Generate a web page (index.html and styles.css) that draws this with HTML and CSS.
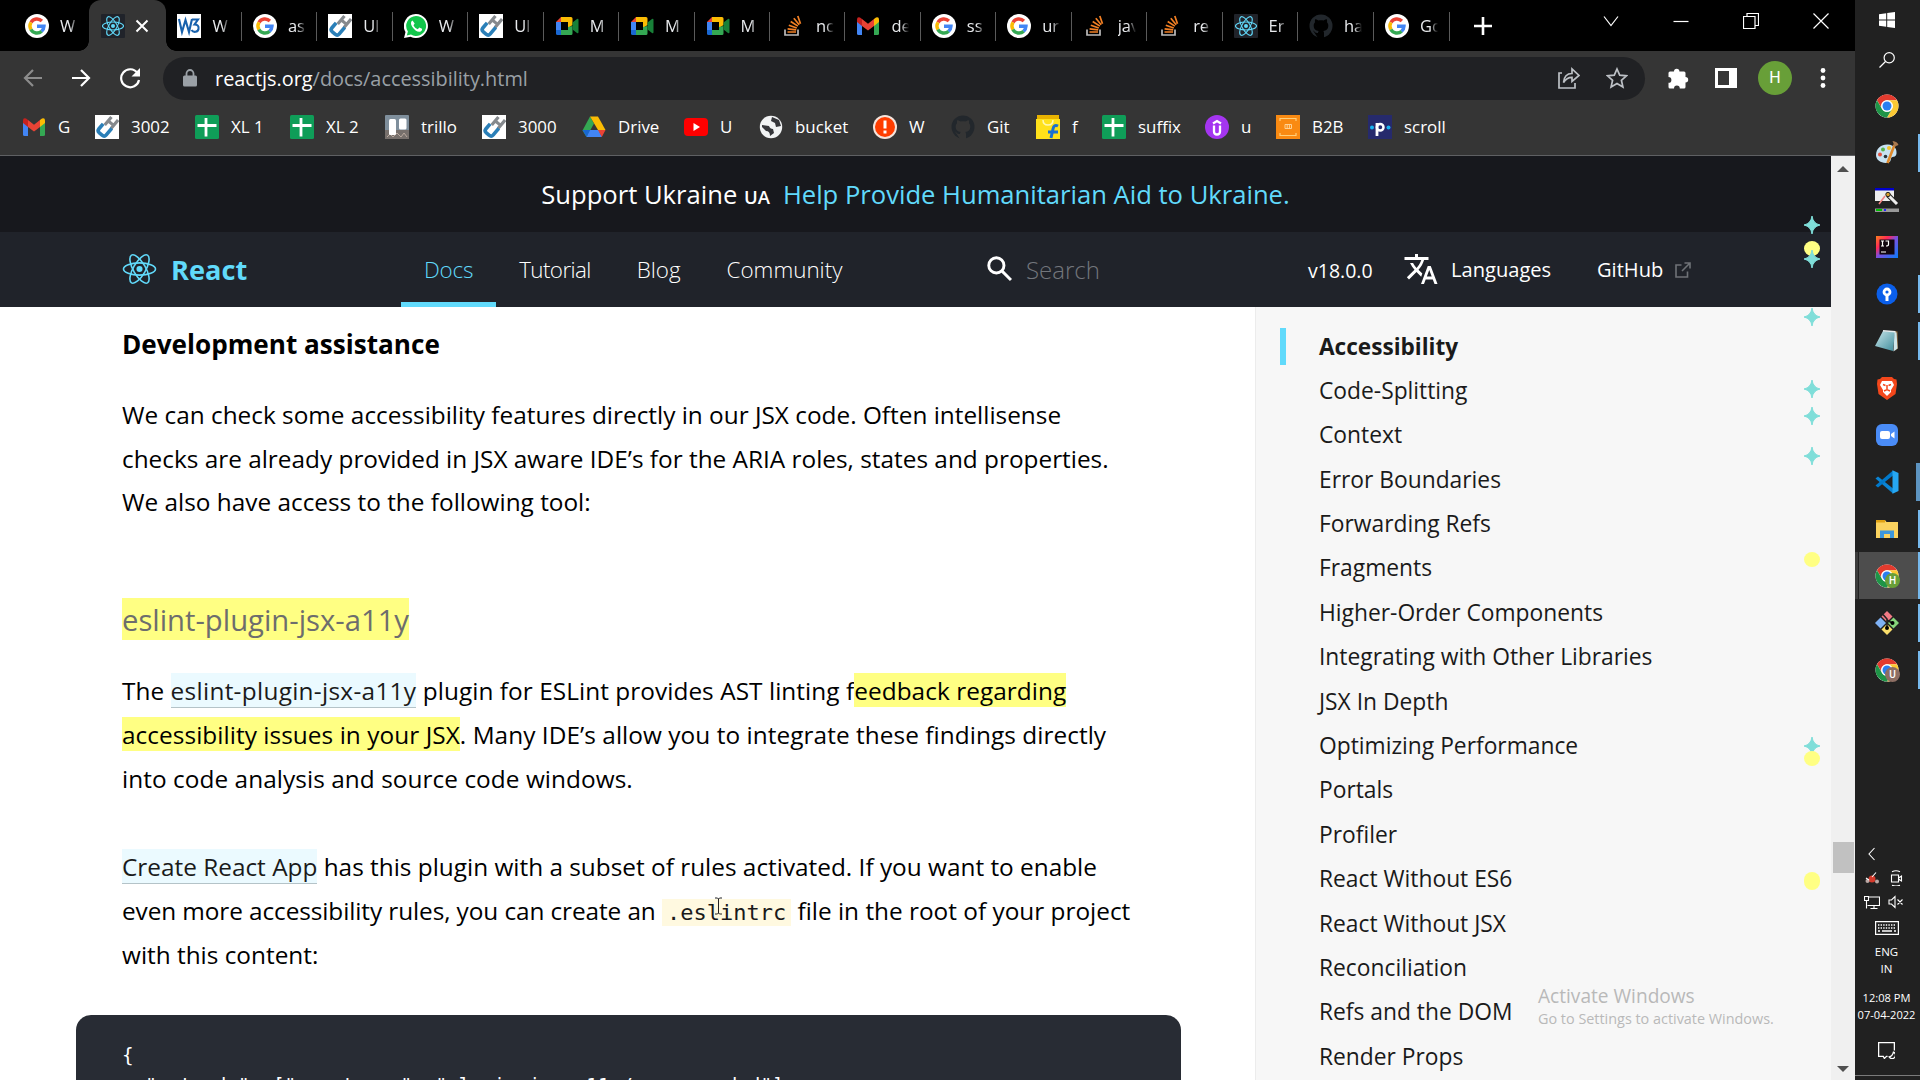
FILE: index.html
```
<!DOCTYPE html>
<html lang="en">
<head>
<meta charset="utf-8">
<title>Accessibility – React</title>
<link rel="stylesheet" href="styles.css">
</head>
<body>
<svg class="defs" aria-hidden="true">
  <defs>
    <linearGradient id="ijg" x1="0" y1="0" x2="1" y2="1"><stop offset="0" stop-color="#fc801d"/><stop offset=".3" stop-color="#fe2857"/><stop offset=".5" stop-color="#7b4fe0"/><stop offset="1" stop-color="#087cfa"/></linearGradient>
    <linearGradient id="note" x1="0" y1="0" x2="1" y2="1"><stop offset="0" stop-color="#c9e6ea"/><stop offset="1" stop-color="#3f8d9c"/></linearGradient>
  </defs>
  <symbol id="google" viewBox="0 0 24 24"><circle cx="12" cy="12" r="12" fill="#fff"/><g fill="none" stroke-width="3.4"><path d="M6 8.300A7 7 0 0 1 16.900 7" stroke="#ea4335"/><path d="M6 15.600A7 7 0 0 1 6 8.300" stroke="#fbbc05"/><path d="M16.700 17.200A7 7 0 0 1 5.900 15.500" stroke="#34a853"/><path d="M12 12.300h7A7 7 0 0 1 16.600 17.300" stroke="#4285f4"/></g></symbol>
  <symbol id="atom" viewBox="-12 -11 24 22"><circle r="2.100" fill="#61dafb"/><g fill="none" stroke="#61dafb" stroke-width="1.100"><ellipse rx="11" ry="4.200"/><ellipse rx="11" ry="4.200" transform="rotate(60)"/><ellipse rx="11" ry="4.200" transform="rotate(120)"/></g></symbol>
  <symbol id="reactfav" viewBox="-12 -12 24 24"><rect x="-12" y="-12" width="24" height="24" rx="1" fill="#20232a"/><circle r="2" fill="#61dafb"/><g fill="none" stroke="#61dafb" stroke-width="1.100"><ellipse rx="10.500" ry="4"/><ellipse rx="10.500" ry="4" transform="rotate(60)"/><ellipse rx="10.500" ry="4" transform="rotate(120)"/></g></symbol>
  <symbol id="w3" viewBox="0 0 24 24"><rect width="24" height="24" fill="#fff"/><path d="M2 5l3 13 3.500-12 3.500 12 3-13M15 5.500h6l-3.500 5c3 0 4.500 1.500 4 4.500-.5 3-5 4-7 1" fill="none" stroke="#1861ac" stroke-width="2.100"/></symbol>
  <symbol id="ub" viewBox="0 0 24 24"><rect width="24" height="24" fill="#fff"/><g fill="none" stroke-width="3.200" transform="rotate(40 12 12)"><path d="M9 1.500v10.500M16 -.5v11M9 6.500h7" stroke="#85898d"/><path d="M7 12v6.500q0 3 3 3h3.500q3 0 3-3V10" stroke="#2a7fb8" stroke-width="3.600"/></g></symbol>
  <symbol id="whatsapp" viewBox="0 0 24 24"><path d="M12 0a12 12 0 1 1-5.500 22.700L0 24l1.500-6A12 12 0 0 1 12 0z" fill="#fff"/><path d="M12 2a10 10 0 1 1-5 18.600L2.800 21.500l1.100-4A10 10 0 0 1 12 2z" fill="#12c64b"/><path d="M8.500 6.500c-2 1-2 3.500-.3 6.200 2.300 3.600 5.600 5.800 8 5 1.600-.6 2-1.700 1.800-2.900l-2.700-1.300-1.500 1.700c-2-.7-3.500-2.200-4.300-4l1.200-1.600z" fill="#fff"/></symbol>
  <symbol id="meet" viewBox="0 0 24 20"><path d="M1 6L6 1v5z" fill="#ea4335"/><path d="M6 1h10q1.500 0 1.500 1.500V9L13 12V6H6z" fill="#fbbc04"/><path d="M1 6h5v8H1z" fill="#4285f4"/><path d="M1 14h5v5H2.500Q1 19 1 17.500z" fill="#1967d2"/><path d="M6 14h7v-3l4.500-1v7.500q0 1.500-1.500 1.500H6z" fill="#34a853"/><path d="M17.500 6.500L22 3q1.500-.8 1.500 1v12q0 1.800-1.500 1l-4.500-3.500z" fill="#188038"/></symbol>
  <symbol id="stack" viewBox="0 0 24 24"><path d="M4 15.500V21h13v-5.500" fill="none" stroke="#bcbbbb" stroke-width="1.700"/><path d="M6.500 18h8.500M6.600 14.800l8.600 1M7.800 11.300l8 2.700M9.700 7.500l7.200 4.600M12.800 4.200l5.400 6.500M16.800 2l2.700 7.700" stroke="#f48024" stroke-width="1.700"/></symbol>
  <symbol id="gmail" viewBox="0 0 24 19"><path d="M1 3v14q0 1.500 1.500 1.500H6V8z" fill="#4285f4"/><path d="M23 3v14q0 1.500-1.500 1.500H18V8z" fill="#34a853"/><path d="M18 2.500L20 1q3-1 3 2v2.500l-5 4z" fill="#fbbc04"/><path d="M6 2.500L4 1Q1 0 1 3v2.500l5 4z" fill="#c5221f"/><path d="M6 2.500l6 4.700 6-4.700v7L12 14 6 9.500z" fill="#ea4335"/></symbol>
  <symbol id="github" viewBox="0 0 24 24"><circle cx="12" cy="12" r="11.500" fill="#22272c"/><path d="M9 24v-5c-3 .5-3.500-2-5-2.500M15 24v-5c0-1-.3-1.500-.7-2 3-.4 5-1.700 5-5.500 0-1.300-.5-2.500-1.300-3.300.2-.8.200-2-.2-3-1.200 0-2.300.7-3.200 1.300-1.700-.4-3.500-.4-5.200 0C8.500 5.900 7.400 5.200 6.200 5.200c-.4 1-.4 2.200-.2 3C5.200 9 4.700 10.200 4.700 11.500c0 3.800 2 5.100 5 5.500-.4.500-.7 1-.7 2v5z" fill="var(--hole,#000)"/></symbol>
  <symbol id="sheet" viewBox="0 0 24 24"><rect width="24" height="24" rx="1.500" fill="#0f9d58"/><path d="M2.500 10.500h19M11 3v18.500" stroke="#fff" stroke-width="2.800"/></symbol>
  <symbol id="trello" viewBox="0 0 24 24"><rect width="24" height="24" rx="1" fill="#7f8f9c"/><path d="M0 15h24v9H0z" fill="#77706c"/><path d="M2 22l3-3 3 3 4-4 4 4 3-4 3 4" stroke="#b9a99e" fill="none"/><rect x="4" y="4" width="7" height="16" rx="1.500" fill="#fff"/><rect x="14" y="3.500" width="7.500" height="11" rx="1.500" fill="#fff"/></symbol>
  <symbol id="drive" viewBox="0 0 24 21"><path d="M8 0l4 7L4.500 20.500 .5 14z" fill="#34a853"/><path d="M8 0h8l7.500 13.500H16z" fill="#fbbc04"/><path d="M7.500 13.500h9l3.500 7H4.500z" fill="#4285f4"/><path d="M.5 13.500h7.700l-3.700 7z" fill="#1967d2"/><path d="M16 13.500h7.500l-3.700 7z" fill="#ea4335"/></symbol>
  <symbol id="youtube" viewBox="0 0 24 18"><rect width="24" height="18" rx="4" fill="#f00"/><path d="M9.500 5v8l6.500-4z" fill="#fff"/></symbol>
  <symbol id="globe" viewBox="0 0 24 24"><circle cx="12" cy="12" r="11.200" fill="#f1f3f4"/><path d="M3 10l7 1q1 3 4 3l1 4-4 3q0-5-4-5l-4-4zM13 2l-1 4 4 2 1 4 5-1-2-6z" fill="#35363a"/></symbol>
  <symbol id="alert" viewBox="0 0 24 24"><circle cx="12" cy="12" r="12" fill="#f5e4dc"/><circle cx="12" cy="12" r="10" fill="#ff3d00"/><path d="M12 5.500v8M12 15.500v3" stroke="#fff" stroke-width="3"/></symbol>
  <symbol id="flip" viewBox="0 0 24 24"><path d="M0 4h24v20H0z" fill="#ffe11b"/><path d="M1 0h22v4H1z" fill="#e8b200"/><path d="M7 5q0 5 5 5t5-5" fill="none" stroke="#fff8b0" stroke-width="1.500"/><path d="M22 11q-4-2-5 3l-2 9M12 17h10" fill="none" stroke="#1a6fd0" stroke-width="3"/></symbol>
  <symbol id="udemy" viewBox="0 0 24 24"><circle cx="12" cy="12" r="12" fill="#a435f0"/><path d="M9 10.500v6q0 3 3 3t3-3v-6M8 8.500L12 6l4 2.500" fill="none" stroke="#fff" stroke-width="2.300"/></symbol>
  <symbol id="b2b" viewBox="0 0 24 24"><rect width="24" height="24" fill="#f98a12"/><path d="M4 6V3.500h16V6M4 18v2.500h16V18" fill="none" stroke="#ffcf7a" stroke-width="1.200"/><path d="M9 9.500h6.500v4H9zM11.200 9.500v4M13.400 9.500v4" fill="none" stroke="#ffd9a0" stroke-width=".9"/></symbol>
  <symbol id="pp" viewBox="0 0 24 24"><rect width="24" height="24" fill="#262a6c"/><path d="M9 8v13" stroke="#fff" stroke-width="2.800"/><circle cx="12.200" cy="12.200" r="3.300" fill="none" stroke="#fff" stroke-width="2.500"/><circle cx="4" cy="12.500" r="2" fill="#19b5f1"/><circle cx="20.500" cy="12.500" r="2" fill="#19b5f1"/></symbol>
  <symbol id="chrome" viewBox="-12 -12 24 24"><circle r="11.500" fill="#fff"/><path d="M-10-5.700A11.500 11.500 0 0 1 10-5.700H0A5.700 5.700 0 0 0-5 2.800z" fill="#e33b2e"/><path d="M10-5.700A11.500 11.500 0 0 1 .2 11.500L5 2.900A5.700 5.700 0 0 0 0-5.700z" fill="#fcc934"/><path d="M0 11.500A11.500 11.500 0 0 1-10-5.700l5 8.600A5.700 5.700 0 0 0 5 2.900z" fill="#1e9447"/><circle r="5.800" fill="#fff"/><circle r="4.500" fill="#2a7ef0"/></symbol>
  <symbol id="spark" viewBox="0 0 16 18"><path d="M8 0Q9 7.500 16 9 9 10.500 8 18 7 10.500 0 9 7 7.500 8 0z" fill="#7fded9" stroke="#7fded9"/></symbol>
</svg>

<div class="desktop">
  <div class="window">
    <div class="tabstrip">
      <div class="tab"><svg><use href="#google"/></svg><span>W</span></div>
      <div class="tab active"><svg><use href="#reactfav"/></svg><svg class="x" viewBox="0 0 14 14"><path d="M1.500 1.500l11 11M12.500 1.500l-11 11" stroke="#fff" stroke-width="2"/></svg></div>
      <div class="tab sep"><svg><use href="#w3"/></svg><span>W</span></div>
      <div class="tab sep"><svg><use href="#google"/></svg><span>as</span></div>
      <div class="tab sep"><svg><use href="#ub"/></svg><span>Ul</span></div>
      <div class="tab sep"><svg><use href="#whatsapp"/></svg><span>W</span></div>
      <div class="tab sep"><svg><use href="#ub"/></svg><span>Ul</span></div>
      <div class="tab sep"><svg><use href="#meet"/></svg><span>M</span></div>
      <div class="tab sep"><svg><use href="#meet"/></svg><span>M</span></div>
      <div class="tab sep"><svg><use href="#meet"/></svg><span>M</span></div>
      <div class="tab sep"><svg><use href="#stack"/></svg><span>nc</span></div>
      <div class="tab sep"><svg><use href="#gmail"/></svg><span>de</span></div>
      <div class="tab sep"><svg><use href="#google"/></svg><span>ss</span></div>
      <div class="tab sep"><svg><use href="#google"/></svg><span>ur</span></div>
      <div class="tab sep"><svg><use href="#stack"/></svg><span>jav</span></div>
      <div class="tab sep"><svg><use href="#stack"/></svg><span>re</span></div>
      <div class="tab sep"><svg><use href="#reactfav"/></svg><span>Er</span></div>
      <div class="tab sep"><svg><use href="#github"/></svg><span>ha</span></div>
      <div class="tab sep"><svg><use href="#google"/></svg><span>Gc</span></div>
      <svg class="newtab" viewBox="0 0 18 18"><path d="M9 0v18M0 9h18" stroke="#fff" stroke-width="2.600"/></svg>
      <div class="controls">
        <svg viewBox="0 0 16 16"><path d="M1 3.500l7 9 7-9" /></svg>
        <svg viewBox="0 0 16 16"><path d="M.5 8.500h15"/></svg>
        <svg viewBox="0 0 16 16"><path d="M.5 3.500h11.500v12H.5zM4 3.500V.5h11.500v12H12"/></svg>
        <svg viewBox="0 0 16 16"><path d="M.5.5l15 15M15.500.5l-15 15"/></svg>
      </div>
    </div>

    <div class="toolbar">
      <svg class="nav dim" viewBox="0 0 20 20"><path d="M19 10H2M10 2l-8 8 8 8"/></svg>
      <svg class="nav" viewBox="0 0 20 20"><path d="M1 10h17M10 2l8 8-8 8"/></svg>
      <svg class="nav reload" viewBox="0 0 22 22"><path d="M18.500 6A9 9 0 1 0 20 13"/><path d="M21 1v8.500h-8.500z" fill="#fff" stroke="none"/></svg>
      <div class="omnibox">
        <svg class="lock" viewBox="0 0 14 18"><rect y="6.500" width="14" height="11" rx="1.500" fill="#9aa0a6"/><path d="M3.500 7V4.500a3.500 3.500 0 0 1 7 0V7" fill="none" stroke="#9aa0a6" stroke-width="1.800"/></svg>
        <span class="url"><b>reactjs.org</b>/docs/accessibility.html</span>
        <svg class="share" viewBox="0 0 22 22"><path d="M4 6H1v15h16v-5M5.500 15.500C6 10 9 6.500 14 6.500V2l7 6.500-7 6v-4.200c-4 0-6.500 1.700-8.500 5.200z"/></svg>
        <svg class="star" viewBox="0 0 22 22"><path d="M11 2l2.700 6.200 6.800.6-5.100 4.500 1.500 6.600L11 16.400l-5.900 3.500 1.500-6.600L1.500 8.800l6.800-.6z"/></svg>
      </div>
      <svg class="puzzle" viewBox="0 0 22 22"><path d="M7 4.500a2.700 2.700 0 0 1 5.400 0H17q1.500 0 1.500 1.500v4a2.700 2.700 0 0 1 0 5.400V20q0 1.500-1.500 1.500h-4.200a2.900 2.900 0 0 0-5.800 0H3Q1.500 21.500 1.500 20v-4.200a2.900 2.900 0 0 0 0-5.800V6Q1.500 4.500 3 4.500z" fill="#fff"/></svg>
      <svg class="panel" viewBox="0 0 22 20"><path d="M1.500 1.500h19v17h-19z" fill="none" stroke="#fff" stroke-width="3"/><path d="M14 0h8v20h-8z" fill="#fff"/></svg>
      <div class="avatar">H</div>
      <svg class="dots" viewBox="0 0 6 20"><circle cx="3" cy="2.500" r="2.400"/><circle cx="3" cy="10" r="2.400"/><circle cx="3" cy="17.500" r="2.400"/></svg>
    </div>

    <div class="bookmarks">
      <span><svg><use href="#gmail"/></svg>G</span>
      <span><svg><use href="#ub"/></svg>3002</span>
      <span><svg><use href="#sheet"/></svg>XL 1</span>
      <span><svg><use href="#sheet"/></svg>XL 2</span>
      <span><svg><use href="#trello"/></svg>trillo</span>
      <span><svg><use href="#ub"/></svg>3000</span>
      <span><svg><use href="#drive"/></svg>Drive</span>
      <span><svg><use href="#youtube"/></svg>U</span>
      <span><svg><use href="#globe"/></svg>bucket</span>
      <span><svg><use href="#alert"/></svg>W</span>
      <span><svg><use href="#github"/></svg>Git</span>
      <span><svg><use href="#flip"/></svg>f</span>
      <span><svg><use href="#sheet"/></svg>suffix</span>
      <span><svg><use href="#udemy"/></svg>u</span>
      <span><svg><use href="#b2b"/></svg>B2B</span>
      <span><svg><use href="#pp"/></svg>scroll</span>
    </div>

    <div class="viewport">
      <div class="page">
        <div class="banner"><span>Support Ukraine <small>UA</small></span><a>Help Provide Humanitarian Aid to Ukraine.</a></div>
        <header class="header">
          <div class="brand"><svg><use href="#atom"/></svg>React</div>
          <nav class="menu"><a class="on">Docs</a><a class="tight">Tutorial</a><a>Blog</a><a>Community</a></nav>
          <div class="search"><svg viewBox="0 0 24 24"><circle cx="9" cy="9" r="7.300"/><path d="M14.500 14.500L23 23"/></svg>Search</div>
          <div class="meta">
            <a class="version">v18.0.0</a>
            <a class="lang"><svg viewBox="0 0 24 24"><path d="M12.870 15.070l-2.540-2.510.03-.03c1.740-1.940 2.980-4.170 3.710-6.530H17V4h-7V2H8v2H1v1.990h11.170C11.500 7.920 10.440 9.750 9 11.350 8.070 10.320 7.300 9.190 6.690 8h-2c.73 1.630 1.730 3.170 2.980 4.560l-5.090 5.020L4 19l5-5 3.110 3.110.76-2.040zM18.500 10h-2L12 22h2l1.120-3h4.750L21 22h2l-4.500-12zm-2.620 7l1.620-4.330L19.120 17h-3.240z" fill="#fff"/></svg>Languages</a>
            <a class="gh">GitHub<svg viewBox="0 0 16 16"><path d="M6.500 3H1v12h11.500V9.500M9.500 1H15v5.500M15 1L7 9"/></svg></a>
          </div>
        </header>
        <div class="body">
          <main class="article">
            <h3>Development assistance</h3>
            <p>We can check some accessibility features directly in our JSX code. Often intellisense<br>checks are already provided in JSX aware IDE’s for the ARIA roles, states and properties.<br>We also have access to the following tool:</p>
            <h4><mark>eslint-plugin-jsx-a11y</mark></h4>
            <p>The <a class="wide">eslint-plugin-jsx-a11y</a> plugin for ESLint provides AST linting f<mark>eedback regarding</mark><br><mark>accessibility issues in your JSX</mark>. Many IDE’s allow you to integrate these findings directly<br>into code analysis and source code windows.</p>
            <p class="second"><a>Create React App</a> has this plugin with a subset of rules activated. If you want to enable<br><span class="snug">even more accessibility rules, you can create an </span><code>.eslintrc</code> file in the root of your project<br>with this content:</p>
            <pre>{
  "extends": ["react-app", "plugin:jsx-a11y/recommended"]
}</pre>
          </main>
          <aside class="sidebar">
            <ul>
              <li class="current">Accessibility</li>
              <li>Code-Splitting</li>
              <li>Context</li>
              <li>Error Boundaries</li>
              <li>Forwarding Refs</li>
              <li>Fragments</li>
              <li>Higher-Order Components</li>
              <li>Integrating with Other Libraries</li>
              <li>JSX In Depth</li>
              <li>Optimizing Performance</li>
              <li>Portals</li>
              <li>Profiler</li>
              <li>React Without ES6</li>
              <li>React Without JSX</li>
              <li>Reconciliation</li>
              <li>Refs and the DOM</li>
              <li>Render Props</li>
            </ul>
          </aside>
        </div>
        <div class="markers">
          <svg class="m1"><use href="#spark"/></svg>
          <i class="m2"></i>
          <svg class="m3"><use href="#spark"/></svg>
          <svg class="m4"><use href="#spark"/></svg>
          <svg class="m5"><use href="#spark"/></svg>
          <svg class="m6"><use href="#spark"/></svg>
          <svg class="m7"><use href="#spark"/></svg>
          <i class="m8"></i>
          <svg class="m9"><use href="#spark"/></svg>
          <i class="m10"></i>
          <i class="m11"></i>
        </div>
        <div class="watermark"><b>Activate Windows</b>Go to Settings to activate Windows.</div>
        <svg class="ibeam" viewBox="0 0 9 18"><path d="M1 1h2.500l1 1 1-1H8M4.500 2v14M1 17h2.500l1-1 1 1H8"/></svg>
      </div>
      <div class="scrollbar">
        <svg viewBox="0 0 12 6"><path d="M0 6l6-6 6 6z"/></svg>
        <div class="thumb"></div>
        <svg viewBox="0 0 12 6"><path d="M0 0l6 6 6-6z"/></svg>
      </div>
    </div>
  </div>

  <div class="taskbar">
    <div class="slot short"><svg class="s16" viewBox="0 0 16 16"><path d="M0 2.200L7.200 1.200V7.500H0zM8.200 1L16 0v7.500H8.200zM0 8.500h7.200v6.300L0 13.800zM8.200 8.500H16V16l-7.800-1z" fill="#fff"/></svg></div>
    <div class="slot short gap"><svg class="s16" viewBox="0 0 16 16"><circle cx="10.200" cy="5.800" r="5.100" fill="none" stroke="#fff" stroke-width="1.200"/><path d="M6.500 9.500L.5 15.500" stroke="#fff" stroke-width="1.300"/></svg></div>
    <div class="slot"><svg><use href="#chrome"/></svg></div>
    <div class="slot open"><svg viewBox="0 0 24 24"><path d="M1 14C1 7 7 3 13 3.500s9 4 8.500 9c-.5 4-4 3-5 4s0 4-3 5C8 23 1 20 1 14z" fill="#c7e2f2"/><circle cx="5" cy="13.500" r="2" fill="#e2513f"/><circle cx="8" cy="8.500" r="2" fill="#58b34b"/><circle cx="14" cy="7" r="2" fill="#f3c22d"/><circle cx="10.500" cy="15.500" r="1.800" fill="#27323a"/><path d="M19.500 4L12.500 22" stroke="#e08a2c" stroke-width="2.600"/><path d="M17.500 0q5 .5 6 4l-5 2q1-3-1-6z" fill="#a9794f"/></svg></div>
    <div class="slot"><svg viewBox="0 0 24 24"><path d="M0 1h19v12H0z" fill="#eee"/><path d="M0 0h19v2.500H0z" fill="#00c"/><path d="M4 16l6-8" stroke="#f08080" stroke-width="1.500"/><path d="M13 7l9 9" stroke="#222" stroke-width="5"/><path d="M13 7l9 9" stroke="#eee" stroke-width="3"/><circle cx="13" cy="6.500" r="2.200" fill="#d89b2c" stroke="#222"/><path d="M0 20.500h24V24H0z" fill="#999"/><path d="M1 21h6v2H1z" fill="#0b0"/><path d="M9 21h2v2H9z" fill="#22f"/></svg></div>
    <div class="slot"><svg viewBox="0 0 24 24"><rect x="1" y="1" width="22" height="22" fill="url(#ijg)"/><rect x="4.500" y="4.500" width="15" height="15" fill="#12060f"/><path d="M6 6h3M7.500 6v5M6 11h3M10.500 6h3v3.500q0 1.500-2.500 1.500M6 17h5" fill="none" stroke="#fff" stroke-width="1.200"/></svg></div>
    <div class="slot open"><svg viewBox="0 0 24 24"><circle cx="12" cy="12" r="10.500" fill="#0b5fea"/><circle cx="12" cy="10" r="3" fill="none" stroke="#fff" stroke-width="2.800"/><path d="M12 13v6" stroke="#fff" stroke-width="3"/></svg></div>
    <div class="slot open"><svg viewBox="0 0 24 24"><path d="M20 2l2.500.5.500 17-3 2z" fill="#8d6b3f"/><path d="M8 2l12 1-2 19L0 17z" fill="url(#note)"/><path d="M19.500 3l2 .5 1 16-4 3z" fill="#cfe6ea"/><path d="M8 1.800l12.500 1" stroke="#e8eef0" stroke-width="1.600"/></svg></div>
    <div class="slot"><svg viewBox="0 0 24 24"><path d="M7 1h10l2 2 2.500.5L22 8l-1.500 10L12 24 3.500 18 2 8l.5-4.500L5 3z" fill="#f4471b"/><path d="M7 5h10l2 4-3 5v2l-4 4-4-4v-2L5 9z" fill="#fff"/><path d="M8 8.500l2.500 1M16 8.500l-2.500 1M12 9v5M9 15l3-1.500 3 1.500" fill="none" stroke="#f4471b" stroke-width="1.500"/></svg></div>
    <div class="slot"><svg viewBox="0 0 24 24"><rect x="1" y="1" width="22" height="22" rx="6" fill="#4a8cf7"/><rect x="5" y="8" width="10" height="8" rx="2" fill="#fff"/><path d="M16 11l3.500-2.500v7L16 13z" fill="#fff"/></svg></div>
    <div class="slot open wide"><svg viewBox="0 0 24 24"><path d="M.5 8.500L3 6.500l15 12V23.500z" fill="#0a84d4"/><path d="M.5 15.500L3 17.500 18 5.500V.5z" fill="#0179cb"/><path d="M17.500.3L23.500 3v18l-6 2.700z" fill="#26a7f2"/></svg></div>
    <div class="slot open"><svg viewBox="0 0 24 24"><path d="M1 3h9l1.500 2H23v16H1z" fill="#fbd35f"/><path d="M1 3h9v2.500H1z" fill="#e0a214"/><path d="M5 21v-7.500h14V21h-4v-4H9v4z" fill="#3d97db"/></svg></div>
    <div class="slot open selected"><svg><use href="#chrome"/></svg><b class="badge green">H</b></div>
    <div class="slot open"><svg viewBox="0 0 24 24"><path d="M12 0l5.500 5.500-5.500 5.500-5.500-5.500z" fill="#f27a85"/><path d="M5.500 6.500l5.500 5.500-5.500 5.500L0 12z" fill="#7fb2f5"/><path d="M18.500 6.500l5.500 5.500-5.500 5.500L13 12z" fill="#86d67b"/><path d="M12 13l5.500 5.500L12 24l-5.500-5.500z" fill="#fbdf6b"/><path d="M8 3.500L12 8v9M12 9l5 3" fill="none" stroke="#222" stroke-width="1.600"/><circle cx="12" cy="17" r="2"/><circle cx="17.500" cy="12" r="2"/></svg></div>
    <div class="slot open"><svg><use href="#chrome"/></svg><b class="badge brown">U</b></div>

    <div class="tray">
      <svg viewBox="0 0 16 16"><path d="M10.500 2L5 8l5.500 6"/></svg><span></span>
      <svg viewBox="0 0 16 16"><circle cx="8" cy="9" r="3.500" fill="#d43a2c" stroke="none"/><circle cx="3.500" cy="11" r="2" fill="#b9a7a4" stroke="none"/><circle cx="13" cy="11.500" r="2" fill="#b9a7a4" stroke="none"/><path d="M8 7l4-4.500M2 8l3 2"/></svg>
      <svg viewBox="0 0 16 16"><path d="M3.500 5h7v7h-7zM10.500 8l3-2v5l-3-2M4 1.800q4-2 8 0M4 15.200q4 1.500 8 0"/></svg>
      <svg viewBox="0 0 16 16"><path d="M5 3h10.500v8.500H3.500M10 11.500v3M6.500 14.500h7M.5 2.500h4v4h-4zM2.500 6.500v8"/></svg>
      <svg viewBox="0 0 16 16"><path d="M1 6h2.500L7 2.500v11L3.500 10H1zM9.500 5.500l5 5M14.500 5.500l-5 5"/></svg>
    </div>
    <svg class="keyboard" viewBox="0 0 24 14"><path d="M.6.600h22.800v12.800H.6z" fill="none" stroke="#fff" stroke-width="1.200"/><path d="M3 4h18M3 7h18" stroke="#fff" stroke-width="1.300" stroke-dasharray="1.400 1.200"/><path d="M3 10h2M7 10h10M19 10h2" stroke="#fff" stroke-width="1.300"/></svg>
    <div class="langs">ENG<br>IN</div>
    <div class="clock">12:08 PM<br><span>07-04-2022</span></div>
    <svg class="notify" viewBox="0 0 16 16"><path d="M9 13.500H8L6 15.500 5 13.500H.6V.6h14.800V8"/><path d="M14.500 9.500a3.200 3.200 0 1 1-4 4.500q3-.5 4-4.500z"/></svg>
    <div class="edge"></div>
  </div>
</div>
</body>
</html>
```
FILE: styles.css
```
* { box-sizing: border-box; }
body { margin: 0; background: #000; font-family: "Open Sans", "Noto Sans", sans-serif; overflow: hidden; }
svg { display: block; flex: none; }
.defs { position: absolute; width: 0; height: 0; }
.desktop { display: flex; width: 1920px; height: 1080px; overflow: hidden; }
.window { width: 1855px; display: flex; flex-direction: column; }

/* tab strip */
.tabstrip { height: 51px; flex: none; display: flex; background: #000; padding-left: 14px; color: #e8eaed; }
.tab { width: 75.450px; height: 51px; display: flex; align-items: center; padding: 0 0 0 11px; position: relative; font-size: 16.500px; }
.tab svg { width: 24px; height: 24px; margin-top: 1px; }
.tab span { margin-left: 11px; white-space: nowrap; -webkit-mask-image: linear-gradient(90deg, #000 10px, transparent 18px); mask-image: linear-gradient(90deg, #000 10px, transparent 18px); }
.tab.sep::after { content: ""; position: absolute; right: 0; top: 12px; width: 1px; height: 29px; background: #5a5a5a; }
.tab:nth-child(n+18) { width: 76px; }
.tab.active { background: #353535; border-radius: 12px 12px 0 0; width: 77px; padding-left: 12px; }
.tab.active::before, .tab.active::after { content: ""; position: absolute; bottom: 0; width: 10px; height: 10px; }
.tab.active::before { left: -10px; background: radial-gradient(circle at 0 0, transparent 9.500px, #353535 10px); }
.tab.active::after { right: -10px; background: radial-gradient(circle at 100% 0, transparent 9.500px, #353535 10px); }
.tab .x { width: 14px; height: 14px; margin-left: 10px; }
.newtab { width: 18px; height: 18px; margin: 17px 0 0 24px; }
.controls { margin-left: auto; display: flex; gap: 54px; padding: 13px 26px 0 0; }
.controls svg { width: 16px; height: 16px; fill: none; stroke: #fff; stroke-width: 1.200; }

/* toolbar */
.toolbar { height: 54px; flex: none; display: flex; align-items: center; background: #353535; padding: 0 29px 0 23px; }
.nav { width: 20px; height: 20px; margin-right: 28px; fill: none; stroke: #fff; stroke-width: 2.200; }
.nav.dim { stroke: #8c8c8c; }
.nav.reload { width: 22px; height: 22px; margin-right: 22px; }
.omnibox { width: 1482px; height: 43px; border-radius: 22px; background: #202124; display: flex; align-items: center; padding: 0 17px 0 20px; }
.lock { width: 14px; height: 18px; margin-right: 18px; }
.url { font-size: 19.900px; color: #9aa0a6; }
.url b { font-weight: 400; color: #fff; }
.share, .star { width: 22px; height: 22px; fill: none; stroke: #bdc1c6; stroke-width: 1.700; }
.share { margin-left: auto; margin-right: 26px; }
.puzzle { width: 22px; height: 22px; margin-left: 22px; }
.panel { width: 22px; height: 20px; margin-left: 26px; }
.avatar { width: 34px; height: 34px; border-radius: 50%; background: #689f38; color: #fff; font: 16px/34px Roboto, sans-serif; text-align: center; margin-left: 21px; }
.dots { width: 6px; height: 20px; fill: #fff; margin-left: auto; }

/* bookmarks */
.bookmarks { height: 51px; flex: none; background: #353535; border-bottom: 1px solid #5f6063; color: #fff; font-size: 16.900px; display: grid; align-items: center; padding-left: 22px;
  grid-template-columns: 73px 100px 95px 95px 97px 100px 102px 75px 114px 78px 85px 66px 103px 71px 92px 100px; --hole: #353535; }
.bookmarks span { display: flex; align-items: center; gap: 12px; height: 44px; line-height: 24px; margin-top: -7px; white-space: nowrap; }
.bookmarks svg { width: 24px; height: 24px; }

/* page */
.viewport { flex: 1; display: flex; min-height: 0; }
.page { width: 1831px; background: #fff; position: relative; display: flex; flex-direction: column; overflow: hidden; }
.banner { height: 76px; flex: none; background: #17181d; color: #fff; font-size: 25.600px; line-height: 77px; display: flex; justify-content: center; gap: 13px; }
.banner small { font-size: 18.500px; font-weight: 600; }
.banner a { color: #61dafb; }
.header { height: 75px; flex: none; background: #20232a; color: #fff; display: flex; align-items: stretch; padding-left: 122px; line-height: 75px; }
.brand { width: 279px; display: flex; align-items: center; gap: 14px; color: #61dafb; font-size: 27.200px; font-weight: 700; }
.brand svg { width: 35px; height: 32px; margin-top: -2px; }
.menu { display: flex; font-size: 22.400px; font-weight: 300; line-height: 75px; width: 586px; }
.menu a { padding: 0 23px; height: 75px; }
.menu .on { color: #61dafb; box-shadow: inset 0 -5px #61dafb; letter-spacing: -.2px; }
.menu .tight { letter-spacing: -.6px; }
.search { width: 321px; display: flex; align-items: center; gap: 14px; font-size: 24px; font-weight: 300; color: #73767c; }
.search svg { width: 25px; height: 25px; fill: none; stroke: #fff; stroke-width: 2.800; margin-top: -2px; }
.meta { display: flex; font-size: 20.100px; line-height: 77px; }
.version { width: 95px; font-size: 19.500px; }
.lang { display: flex; align-items: center; width: 194px; gap: 12px; }
.lang svg { width: 36px; height: 36px; margin-top: -2px; }
.gh { display: flex; align-items: center; gap: 12px; }
.gh svg { width: 16px; height: 16px; fill: none; stroke: #6f7277; stroke-width: 1.600; }
.body { flex: 1; display: flex; min-height: 0; }
.article { width: 1255px; flex: none; padding: 17px 0 0 122px; color: #000; }
h3 { margin: 0; font-size: 26.120px; line-height: 40px; font-weight: 700; }
p { margin: 29px 0 0; font-size: 24.360px; line-height: 43.700px; white-space: nowrap; }
h4 { margin: 71px 0 0; font-size: 29.240px; line-height: 50px; font-weight: 400; color: #6d6d6d; }
h4 mark { color: inherit; padding-top: 2px; }
h4 + p { margin-top: 24px; letter-spacing: .06px; }
p.second { margin-top: 44.500px; line-height: 44.300px; }
mark { background: #ffff83; color: #000; padding-top: 1px; }
p a { background: #ebfaff; color: #1a1a1a; border-bottom: 1px solid #b4c3c8; padding-top: 1px; }
p a.wide { letter-spacing: .3px; }
.snug { letter-spacing: -.09px; }
code { font: 22px/28px "DejaVu Sans Mono", monospace; background: #fff9e0; color: #1a1a1a; padding: 1px 5px; }
pre { margin: 37px 0 0 -46px; width: 1105px; height: 120px; border-radius: 15px; background: #282c34; color: #fff; padding: 26px 0 0 46px; font: 19.300px/30px "DejaVu Sans Mono", monospace; }
.sidebar { width: 576px; flex: none; border-left: 1px solid #ececec; background: #f7f7f7; }
ul { list-style: none; margin: 0; padding: 17.500px 0 0 24px; font-size: 22.800px; line-height: 44.400px; color: #1a1a1a; }
li { padding-left: 39px; height: 44.400px; }
li.current { font-weight: 700; position: relative; font-size: 22.600px; }
li.current::before { content: ""; position: absolute; left: 0; top: 3px; width: 6px; height: 37px; background: #61dafb; }

/* overlays on the page */
.markers > * { position: absolute; left: 1804px; width: 16px; height: 18px; }
.markers i { height: 15px; border-radius: 50%; background: #ffff83; }
.markers .m1 { top: 60px; } .markers .m2 { top: 85px; } .markers .m3 { top: 94px; }
.markers .m4 { top: 152px; } .markers .m5 { top: 224px; } .markers .m6 { top: 251px; }
.markers .m7 { top: 291px; } .markers .m8 { top: 396px; } .markers .m9 { top: 581px; }
.markers .m10 { top: 595px; } .markers .m11 { top: 716px; height: 18px; border-radius: 8px; }
.watermark { position: absolute; left: 1538px; top: 827px; font-size: 14.400px; line-height: 20px; color: #b9b9b9; white-space: nowrap; }
.watermark b { display: block; font-weight: 400; font-size: 19.100px; line-height: 26px; }
.ibeam { position: absolute; left: 714px; top: 741px; width: 9px; height: 18px; fill: none; stroke: #222; stroke-width: 1; }

.scrollbar { width: 24px; background: #f0f0f0; display: flex; flex-direction: column; align-items: center; padding: 10px 0 8px; }
.scrollbar svg { width: 12px; height: 6px; fill: #505050; }
.thumb { width: 21px; height: 31px; background: #c1c1c1; margin: 670px 0 auto; }

/* taskbar */
.taskbar { width: 65px; background: #212121; color: #fff; display: flex; flex-direction: column; align-items: center; }
.slot { width: 65px; height: 47px; flex: none; display: flex; align-items: center; justify-content: center; position: relative; padding-right: 2px; }
.slot svg { width: 24px; height: 24px; }
.slot .s16 { width: 16px; height: 16px; }
.slot.short { height: 40px; }
.slot.gap { margin-bottom: 2px; }
.slot.open::after { content: ""; position: absolute; right: 0; top: 5px; width: 2px; height: 38px; background: #76b9ed; }
.slot.wide::after { width: 4px; background: #5d94c1; }
.slot.selected { background: linear-gradient(90deg, #3c3c3c 3px, #222 3px 4px, #4d4d4d 4px); }
.slot.selected::after { top: 0; height: 47px; }
.badge { position: absolute; left: 30px; top: 21px; width: 15px; height: 15px; border-radius: 50%; font: 500 10px/15px Roboto, sans-serif; text-align: center; }
.badge.green { background: #689f38; }
.badge.brown { background: #8d6e63; }
.tray { display: grid; grid-template-columns: 16px 16px; column-gap: 8px; row-gap: 8px; margin: 153px 8px 0 0; }
.tray svg { width: 16px; height: 16px; fill: none; stroke: #fff; stroke-width: 1.100; }
.keyboard { width: 24px; height: 14px; margin: 11px 2px 0 0; }
.langs { font-size: 11.500px; line-height: 17px; text-align: center; margin: 8px 2px 0 0; }
.clock { font-size: 11.100px; line-height: 17px; text-align: center; margin: 12px 2px 0 0; white-space: nowrap; }
.notify { width: 17px; height: 17px; margin: 19px 2px 0 0; fill: none; stroke: #fff; stroke-width: 1.200; }
.edge { width: 65px; height: 1px; background: #7a7a7a; margin-top: auto; margin-bottom: 4px; }
```
